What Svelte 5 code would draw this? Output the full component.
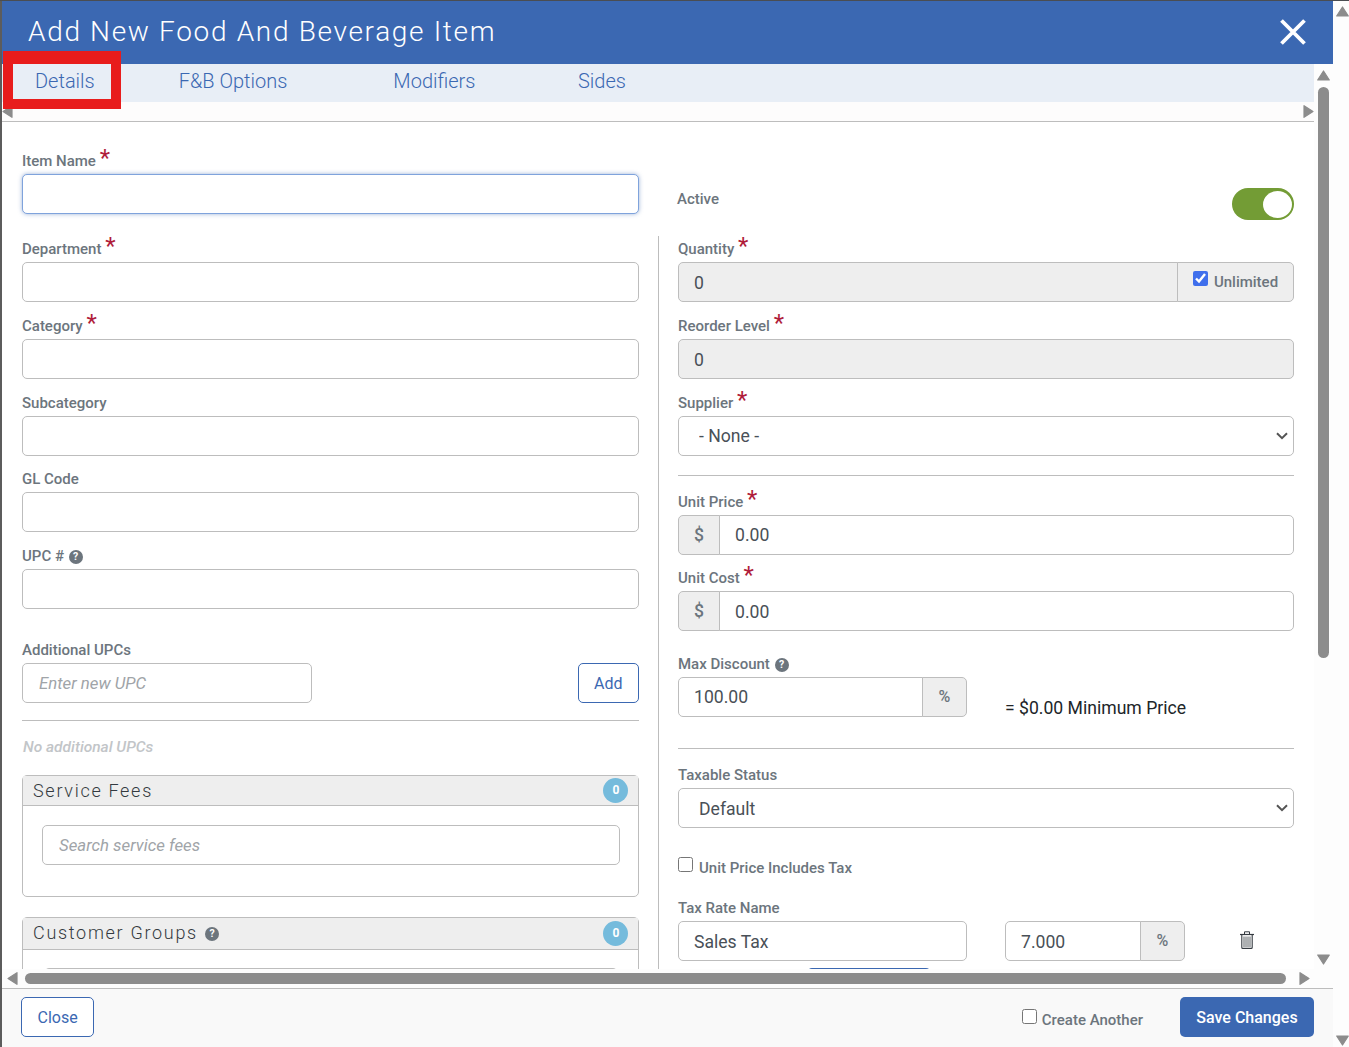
{#snippet star()}<span class="star">*</span>{/snippet}
{#snippet help()}<span class="help">?</span>{/snippet}
{#snippet arrow(dir)}
	<svg class="arrow arrow-{dir}" viewBox="0 0 13 13" aria-hidden="true">
		<polygon points="6.5,2 12.3,11 0.7,11" stroke="#8c8c8c" stroke-width="1.2" stroke-linejoin="round" fill="#8c8c8c" />
	</svg>
{/snippet}

<div class="page">
	<div class="modal">
		<header>
			<h1>Add New Food And Beverage Item</h1>
			<button class="close-x" aria-label="Close">
				<svg viewBox="0 0 28 28" width="28" height="28">
					<path d="M2.5 2.5 L25.5 25.5 M25.5 2.5 L2.5 25.5" stroke="#fff" stroke-width="3.8" fill="none" />
				</svg>
			</button>
		</header>

		<div class="body">
			<div class="body-top">
				<div class="main">
					<nav class="tabs">
						<a href="#details">Details</a>
						<a href="#options">F&amp;B Options</a>
						<a href="#modifiers">Modifiers</a>
						<a href="#sides">Sides</a>
					</nav>
					<div class="tab-scroll">
						{@render arrow('left')}
						{@render arrow('right')}
					</div>

					<div class="content">
						<div class="left">
							<div class="field first">
								<label>Item Name {@render star()}</label>
								<input class="focused" type="text" />
							</div>
							<div class="field">
								<label>Department {@render star()}</label>
								<input type="text" />
							</div>
							<div class="field">
								<label>Category {@render star()}</label>
								<input type="text" />
							</div>
							<div class="field">
								<label>Subcategory</label>
								<input type="text" />
							</div>
							<div class="field">
								<label>GL Code</label>
								<input type="text" />
							</div>
							<div class="field upc">
								<label>UPC # {@render help()}</label>
								<input type="text" />
							</div>

							<label>Additional UPCs</label>
							<div class="add-row">
								<input type="text" placeholder="Enter new UPC" />
								<button class="btn-outline">Add</button>
							</div>
							<hr class="upc-line" />
							<p class="empty">No additional UPCs</p>

							<section class="card fees">
								<div class="card-head">
									<span>Service Fees</span>
									<span class="badge">0</span>
								</div>
								<div class="card-body">
									<input type="text" placeholder="Search service fees" />
								</div>
							</section>

							<section class="card groups">
								<div class="card-head">
									<span class="head-title">Customer Groups {@render help()}</span>
									<span class="badge">0</span>
								</div>
								<div class="card-body">
									<input type="text" />
								</div>
							</section>
						</div>

						<div class="right">
							<div class="active-row">
								<span class="active-label">Active</span>
								<span class="toggle"><span class="knob"></span></span>
							</div>

							<div class="right-fields">
								<div class="field">
									<label>Quantity {@render star()}</label>
									<div class="group">
										<input type="text" value="0" disabled />
										<span class="addon unlimited">
											<input type="checkbox" checked />
											<span>Unlimited</span>
										</span>
									</div>
								</div>
								<div class="field">
									<label>Reorder Level {@render star()}</label>
									<input type="text" value="0" disabled />
								</div>
								<div class="field supplier">
									<label>Supplier {@render star()}</label>
									<select>
										<option>- None -</option>
									</select>
								</div>
								<hr class="supplier-line" />
								<div class="field">
									<label>Unit Price {@render star()}</label>
									<div class="group">
										<span class="addon dollar">$</span>
										<input type="text" value="0.00" />
									</div>
								</div>
								<div class="field discount-gap">
									<label>Unit Cost {@render star()}</label>
									<div class="group">
										<span class="addon dollar">$</span>
										<input type="text" value="0.00" />
									</div>
								</div>
								<label>Max Discount {@render help()}</label>
								<div class="discount-row">
									<div class="group discount">
										<input type="text" value="100.00" />
										<span class="addon percent">%</span>
									</div>
									<span class="min-price">= $0.00 Minimum Price</span>
								</div>
								<hr class="discount-line" />
								<div class="field taxable">
									<label>Taxable Status</label>
									<select>
										<option>Default</option>
									</select>
								</div>
								<div class="check-row">
									<input type="checkbox" />
									<span>Unit Price Includes Tax</span>
								</div>
								<label>Tax Rate Name</label>
								<div class="tax-row">
									<input class="tax-name" type="text" value="Sales Tax" />
									<div class="group tax-rate">
										<input type="text" value="7.000" />
										<span class="addon percent">%</span>
									</div>
									<button class="trash" aria-label="Delete tax rate">
										<svg viewBox="0 0 14 18" width="14" height="18" fill="none" stroke="#343a40">
											<path d="M0 3.5 H14" stroke-width="1.2" />
											<path d="M4.5 3 V0.8 H9.5 V3" stroke-width="1" />
											<path d="M1.8 4 V16.4 Q1.8 17.4 2.8 17.4 H11.2 Q12.2 17.4 12.2 16.4 V4" stroke-width="1.1" />
											<path d="M4 5.5 V16 M6 5.5 V16 M8 5.5 V16 M10 5.5 V16" stroke-width="0.8" />
										</svg>
									</button>
								</div>
								<button class="btn-add-tax" aria-label="Add tax rate"></button>
							</div>
						</div>
					</div>
				</div>

				<div class="vscroll">
					{@render arrow('up')}
					<div class="v-thumb"></div>
					{@render arrow('down')}
				</div>
			</div>

			<div class="hscroll">
				{@render arrow('left')}
				<div class="h-thumb"></div>
				{@render arrow('right')}
			</div>
		</div>

		<footer>
			<button class="btn-outline">Close</button>
			<div class="create">
				<input type="checkbox" />
				<span>Create Another</span>
			</div>
			<button class="btn-save">Save Changes</button>
		</footer>

		<div class="highlight"></div>
	</div>

	<div class="page-scroll">
		{@render arrow('up')}
		{@render arrow('down')}
	</div>
</div>

<style>
	:global(body) {
		margin: 0;
		font-family: Roboto, 'Noto Sans', sans-serif;
	}

	.page {
		display: flex;
		box-sizing: border-box;
		width: 1349px;
		height: 1047px;
		overflow: hidden;
		border-top: 1px solid #4a4d52;
		background: #fdfdfd;
	}

	.modal {
		position: relative;
		display: flex;
		flex-direction: column;
		flex: 1;
		min-width: 0;
		border-left: 2px solid #5c5c5c;
		background: #fff;
	}

	header {
		display: flex;
		flex-shrink: 0;
		align-items: center;
		justify-content: space-between;
		height: 63px;
		padding: 0 26px;
		background: #3b68b2;
	}

	h1 {
		margin: 0 0 2px;
		color: #fff;
		font-size: 28px;
		font-weight: 300;
		letter-spacing: 1.67px;
	}

	.close-x {
		display: flex;
		margin-bottom: 2px;
		padding: 0;
		border: none;
		background: none;
	}

	.body {
		display: flex;
		flex-direction: column;
		flex: 1;
		min-height: 0;
	}

	.body-top {
		display: flex;
		flex: 1;
		min-height: 0;
	}

	.main {
		display: flex;
		flex-direction: column;
		flex: 1;
		min-width: 0;
	}

	.tabs {
		display: flex;
		flex-shrink: 0;
		height: 38px;
		padding-left: 33px;
		background: #e8eef6;
	}

	.tabs a {
		color: #3b68b2;
		font-size: 20px;
		font-weight: 300;
		line-height: 35px;
		text-decoration: none;
	}

	.tabs a:nth-child(2) {
		margin-left: 84px;
	}

	.tabs a:nth-child(3) {
		margin-left: 106px;
	}

	.tabs a:nth-child(4) {
		margin-left: 102.5px;
	}

	.tab-scroll {
		display: flex;
		flex-shrink: 0;
		align-items: center;
		justify-content: space-between;
		height: 19px;
		padding: 0;
		border-bottom: 1px solid #bdbdbd;
		background: #fdfcfc;
	}

	.tab-scroll .arrow {
		margin: 0 -1px;
	}

	.arrow {
		display: block;
		flex-shrink: 0;
		width: 13px;
		height: 13px;
	}

	.arrow-left {
		transform: rotate(-90deg);
	}

	.arrow-right {
		transform: rotate(90deg);
	}

	.arrow-down {
		transform: rotate(180deg);
	}

	.content {
		display: flex;
		flex: 1;
		min-height: 0;
		overflow: hidden;
		padding-left: 20px;
	}

	.left {
		flex-shrink: 0;
		width: 617px;
		padding-top: 28px;
	}

	.right {
		flex-shrink: 0;
		width: 616px;
		margin-left: 39px;
	}

	.field {
		margin-bottom: 12.67px;
	}

	.field.first {
		margin-bottom: 24.4px;
	}

	.field.upc {
		margin-bottom: 30px;
	}

	label {
		display: block;
		height: 24px;
		color: #6c757d;
		font-size: 15px;
		font-weight: 500;
		line-height: 22.6px;
		white-space: nowrap;
	}

	.star {
		display: inline-block;
		color: #b01c3a;
		font-size: 24px;
		font-weight: 400;
		line-height: 0;
		vertical-align: 0;
	}

	.help {
		display: inline-block;
		width: 14px;
		height: 14px;
		margin-left: 1px;
		border-radius: 50%;
		background: #6c757d;
		color: #fff;
		font-size: 10.5px;
		font-weight: 700;
		letter-spacing: 0;
		line-height: 14px;
		text-align: center;
		vertical-align: 1px;
	}

	input[type='text'],
	select {
		display: block;
		box-sizing: border-box;
		width: 100%;
		height: 40px;
		padding: 1px 15px 0;
		border: 1px solid #bdbdbd;
		border-radius: 5px;
		background: #fff;
		color: #495057;
		font-family: inherit;
		font-size: 17.6px;
		outline: none;
	}

	select {
		padding: 0 24px 0 20px;
		appearance: none;
		background-image: url("data:image/svg+xml,%3Csvg xmlns='http://www.w3.org/2000/svg' width='12' height='8'%3E%3Cpath d='M1 1.2 L6 6.2 L11 1.2' fill='none' stroke='%23555' stroke-width='2'/%3E%3C/svg%3E");
		background-position: right 5px center;
		background-repeat: no-repeat;
	}

	input::placeholder {
		color: #a0a4a8;
		font-size: 16.8px;
		font-style: italic;
		opacity: 1;
	}

	input:disabled {
		background: #eee;
		opacity: 1;
	}

	input.focused {
		border-color: #7fa3dc;
		box-shadow: 0 0 4px rgba(59, 104, 178, 0.5);
	}

	input[type='checkbox'] {
		width: 15px;
		height: 15px;
		margin: 0;
		accent-color: #3f6fec;
	}

	.add-row {
		display: flex;
		justify-content: space-between;
	}

	.add-row input[type='text'] {
		width: 290px;
		padding: 0 16px;
	}

	.btn-outline {
		box-sizing: border-box;
		height: 40px;
		padding: 0 15.5px;
		border: 1px solid #3b68b2;
		border-radius: 5px;
		background: #fff;
		color: #3b68b2;
		font-family: inherit;
		font-size: 16px;
	}

	hr {
		height: 1px;
		margin: 0;
		border: none;
		background: #bdbdbd;
	}

	.upc-line {
		margin-top: 17px;
	}

	.empty {
		margin: 18px 0 0;
		padding-left: 1px;
		color: #c2c5c8;
		font-size: 15.5px;
		font-style: italic;
		font-weight: 500;
		line-height: 17px;
	}

	.card {
		border: 1px solid #bdbdbd;
		border-radius: 5px;
	}

	.fees {
		margin-top: 19px;
	}

	.groups {
		margin-top: 20px;
	}

	.card-head {
		display: flex;
		align-items: center;
		justify-content: space-between;
		height: 29px;
		padding: 0 10px;
		border-bottom: 1px solid #bdbdbd;
		background: #eee;
		color: #343a40;
		font-size: 18px;
		font-weight: 300;
		letter-spacing: 1.7px;
	}

	.groups .card-head {
		height: 31px;
	}

	.head-title {
		margin-top: -2px;
	}

	.head-title .help {
		vertical-align: 2px;
	}

	.badge {
		width: 25px;
		height: 25px;
		border-radius: 50%;
		background: #75bbdc;
		color: #fff;
		font-size: 12px;
		font-weight: 700;
		letter-spacing: 0;
		line-height: 25px;
		text-align: center;
		text-indent: 1px;
	}

	.card-body {
		box-sizing: border-box;
		height: 90px;
		padding: 19px 18px 0 19px;
	}

	.card-body input[type='text'] {
		padding: 0 16px;
	}

	.groups .card-body {
		padding: 18px 20px 0 21px;
	}

	.active-row {
		display: flex;
		align-items: center;
		justify-content: space-between;
		height: 32px;
		margin: 66px 0 16px;
	}

	.active-label {
		margin-top: -10px;
		margin-left: -1px;
		color: #6c757d;
		font-size: 15px;
		font-weight: 500;
	}

	.toggle {
		display: flex;
		align-items: center;
		justify-content: flex-end;
		box-sizing: border-box;
		width: 62px;
		height: 32px;
		padding-right: 2px;
		border-radius: 16px;
		background: #739c35;
	}

	.knob {
		width: 29px;
		height: 27px;
		border-radius: 50%;
		background: #fff;
	}

	.right-fields {
		margin-left: -20px;
		padding-top: 2.4px;
		padding-left: 19px;
		border-left: 1px solid #bdbdbd;
	}

	.group {
		display: flex;
	}

	.group input[type='text'] {
		flex: 1;
		min-width: 0;
		border-radius: 0 5px 5px 0;
	}

	.group input:first-child[type='text'] {
		border-radius: 5px 0 0 5px;
	}

	.addon {
		display: flex;
		flex-shrink: 0;
		align-items: center;
		justify-content: center;
		box-sizing: border-box;
		height: 40px;
		border: 1px solid #bdbdbd;
		background: #eee;
		color: #6c757d;
		font-size: 16px;
		font-weight: 500;
	}

	.addon.dollar {
		width: 42px;
		margin-right: -1px;
		border-radius: 5px 0 0 5px;
		font-size: 17.6px;
	}

	.addon.percent {
		width: 45px;
		margin-left: -1px;
		border-radius: 0 5px 5px 0;
	}

	.addon.unlimited {
		gap: 6px;
		width: 117px;
		margin-left: -1px;
		border-radius: 0 5px 5px 0;
		font-size: 15px;
		font-weight: 500;
	}

	.addon.unlimited input {
		margin-bottom: 7px;
	}

	.supplier {
		margin-bottom: 19px;
	}

	.supplier-line {
		margin-bottom: 15px;
	}

	.discount-gap {
		margin-bottom: 21.4px;
	}

	.discount-row {
		display: flex;
		align-items: flex-end;
	}

	.discount {
		width: 289px;
	}

	.min-price {
		margin-left: 38px;
		margin-bottom: -1px;
		color: #212529;
		font-size: 17.6px;
	}

	.discount-line {
		margin: 31px 0 15px;
	}

	.taxable {
		margin-bottom: 29px;
	}

	.taxable select {
		padding-top: 2px;
	}

	.check-row {
		display: flex;
		gap: 6px;
		align-items: flex-start;
		height: 20px;
		margin-bottom: 20px;
		color: #6c757d;
		font-size: 15px;
		font-weight: 500;
		line-height: 22px;
	}

	.tax-row {
		display: flex;
	}

	.tax-row input[type='text'] {
		padding-top: 3px;
	}

	.tax-name {
		flex-shrink: 0;
		width: 289px !important;
	}

	.tax-rate {
		flex-shrink: 0;
		width: 180px;
		margin-left: 38px;
	}

	.trash {
		display: flex;
		align-items: center;
		padding: 0 0 2px;
		margin-left: 55px;
		border: none;
		background: none;
	}

	.btn-add-tax {
		display: block;
		width: 124px;
		height: 40px;
		margin: 7px 0 0 129px;
		border: none;
		border-radius: 5px;
		background: #3b68b2;
	}

	.vscroll {
		display: flex;
		flex-direction: column;
		flex-shrink: 0;
		align-items: center;
		box-sizing: border-box;
		width: 19px;
		padding: 5px 0 3px;
		background: #fdfdfd;
	}

	.v-thumb {
		flex-shrink: 0;
		width: 11px;
		height: 571px;
		margin: 5px 0 auto;
		border-radius: 6px;
		background: #8c8c8c;
	}

	.hscroll {
		display: flex;
		flex-shrink: 0;
		align-items: center;
		box-sizing: border-box;
		height: 19px;
		padding: 0 0 0 4px;
		background: #fdfdfd;
	}

	.h-thumb {
		flex-shrink: 0;
		width: 1261px;
		height: 11px;
		margin: 0 12px 0 6px;
		border-radius: 6px;
		background: #8c8c8c;
	}

	footer {
		display: flex;
		flex-shrink: 0;
		align-items: flex-start;
		box-sizing: border-box;
		height: 59px;
		padding: 8px 19px 0;
		border-top: 1px solid #bdbdbd;
		background: #f9f9f9;
	}

	.create {
		display: flex;
		gap: 5px;
		align-items: flex-start;
		margin: 12px 37px 0 auto;
		color: #6c757d;
		font-size: 15px;
		font-weight: 500;
		line-height: 22px;
	}

	.create input[type='checkbox'] {
		margin-left: -1px;
	}

	.btn-save {
		box-sizing: border-box;
		width: 134px;
		height: 40px;
		border: none;
		border-radius: 5px;
		background: #3b68b2;
		color: #fff;
		font-family: inherit;
		font-size: 16px;
		font-weight: 500;
	}

	.highlight {
		position: absolute;
		top: 50px;
		left: 1px;
		box-sizing: border-box;
		width: 118px;
		height: 58px;
		border: solid #e81c1c;
		border-width: 13px 10px 10px;
		pointer-events: none;
	}

	.page-scroll {
		display: flex;
		flex-direction: column;
		flex-shrink: 0;
		align-items: center;
		justify-content: space-between;
		box-sizing: border-box;
		width: 16px;
		padding: 4px 0 0 2px;
	}
</style>
